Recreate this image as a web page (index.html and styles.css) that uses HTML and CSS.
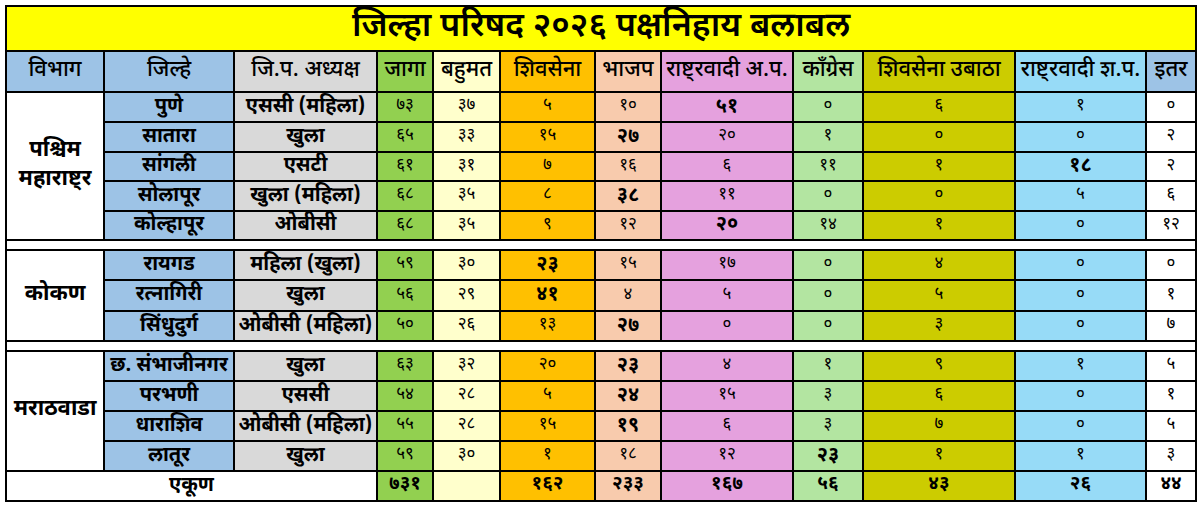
FILE: index.html
```html
<!DOCTYPE html>
<html lang="mr">
<head>
<meta charset="utf-8">
<title>जिल्हा परिषद २०२६ पक्षनिहाय बलाबल</title>
<link rel="stylesheet" href="styles.css">
</head>
<body>
<table class="sheet">
  <colgroup>
    <col class="w-vibhag">
    <col class="w-jilha bg-blue">
    <col class="w-adhyaksha bg-gray">
    <col class="w-jaga bg-green">
    <col class="w-bahumat bg-cream">
    <col class="w-ss bg-orange">
    <col class="w-bjp bg-peach">
    <col class="w-ncp bg-pink">
    <col class="w-cong bg-lgreen">
    <col class="w-ubt bg-olive">
    <col class="w-ncpsp bg-sky">
    <col class="w-itar">
  </colgroup>
  <tbody>
    <tr class="h-title"><td colspan="12" class="title">जिल्हा परिषद २०२६ पक्षनिहाय बलाबल</td></tr>
    <tr class="h-head head">
      <th class="bg-blue">विभाग</th><th>जिल्हे</th><th>जि.प. अध्यक्ष</th><th>जागा</th><th>बहुमत</th><th>शिवसेना</th><th>भाजप</th><th>राष्ट्रवादी अ.प.</th><th>कॉंग्रेस</th><th>शिवसेना उबाठा</th><th>राष्ट्रवादी श.प.</th><th class="bg-blue">इतर</th>
    </tr>

    <tr class="h30"><td rowspan="5" class="region">पश्चिम<br>महाराष्ट्र</td><td class="name">पुणे</td><td class="name">एससी (महिला)</td><td>७३</td><td>३७</td><td>५</td><td>१०</td><td class="win">५१</td><td>०</td><td>६</td><td>१</td><td>०</td></tr>
    <tr class="h30"><td class="name">सातारा</td><td class="name">खुला</td><td>६५</td><td>३३</td><td>१५</td><td class="win">२७</td><td>२०</td><td>१</td><td>०</td><td>०</td><td>२</td></tr>
    <tr class="h29"><td class="name">सांगली</td><td class="name">एसटी</td><td>६१</td><td>३१</td><td>७</td><td>१६</td><td>६</td><td>११</td><td>१</td><td class="win">१८</td><td>२</td></tr>
    <tr class="h30"><td class="name">सोलापूर</td><td class="name">खुला (महिला)</td><td>६८</td><td>३५</td><td>८</td><td class="win">३८</td><td>११</td><td>०</td><td>०</td><td>५</td><td>६</td></tr>
    <tr class="h29"><td class="name">कोल्हापूर</td><td class="name">ओबीसी</td><td>६८</td><td>३५</td><td>९</td><td>१२</td><td class="win">२०</td><td>१४</td><td>१</td><td>०</td><td>१२</td></tr>

    <tr class="sep"><td colspan="12" class="blank"></td></tr>

    <tr class="h30"><td rowspan="3" class="region">कोकण</td><td class="name">रायगड</td><td class="name">महिला (खुला)</td><td>५९</td><td>३०</td><td class="win">२३</td><td>१५</td><td>१७</td><td>०</td><td>४</td><td>०</td><td>०</td></tr>
    <tr class="h31"><td class="name">रत्नागिरी</td><td class="name">खुला</td><td>५६</td><td>२९</td><td class="win">४१</td><td>४</td><td>५</td><td>०</td><td>५</td><td>०</td><td>१</td></tr>
    <tr class="h30"><td class="name">सिंधुदुर्ग</td><td class="name">ओबीसी (महिला)</td><td>५०</td><td>२६</td><td>१३</td><td class="win">२७</td><td>०</td><td>०</td><td>३</td><td>०</td><td>७</td></tr>

    <tr class="sep"><td colspan="12" class="blank"></td></tr>

    <tr class="h30"><td rowspan="4" class="region">मराठवाडा</td><td class="name">छ. संभाजीनगर</td><td class="name">खुला</td><td>६३</td><td>३२</td><td>२०</td><td class="win">२३</td><td>४</td><td>१</td><td>९</td><td>१</td><td>५</td></tr>
    <tr class="h30"><td class="name">परभणी</td><td class="name">एससी</td><td>५४</td><td>२८</td><td>५</td><td class="win">२४</td><td>१५</td><td>३</td><td>६</td><td>०</td><td>१</td></tr>
    <tr class="h30"><td class="name">धाराशिव</td><td class="name">ओबीसी (महिला)</td><td>५५</td><td>२८</td><td>१५</td><td class="win">१९</td><td>६</td><td>३</td><td>७</td><td>०</td><td>५</td></tr>
    <tr class="h30"><td class="name">लातूर</td><td class="name">खुला</td><td>५९</td><td>३०</td><td>१</td><td>१८</td><td>१२</td><td class="win">२३</td><td>१</td><td>१</td><td>३</td></tr>

    <tr class="h30 total"><td colspan="3" class="blank label">एकूण</td><td>७३१</td><td></td><td>१६२</td><td>२३३</td><td>१६७</td><td>५६</td><td>४३</td><td>२६</td><td>४४</td></tr>
  </tbody>
</table>
</body>
</html>
```

FILE: styles.css
```css
html, body {
  margin: 0;
  padding: 0;
  background: #ffffff;
}

body {
  font-family: "Noto Sans Devanagari", "Nirmala UI", "Noto Sans", sans-serif;
  color: #000;
}

.sheet {
  border-collapse: collapse;
  table-layout: fixed;
  width: 1190px;
  margin: 5px 0 0 5px;
}

.sheet td,
.sheet th {
  border: 2px solid #000;
  padding: 0;
  text-align: center;
  vertical-align: middle;
  white-space: nowrap;
  overflow: hidden;
  font-size: 17px;
  font-weight: 400;
  line-height: 1.2;
}

/* column widths */
.w-vibhag { width: 98px; }
.w-jilha { width: 130px; }
.w-adhyaksha { width: 143px; }
.w-jaga { width: 56px; }
.w-bahumat { width: 67px; }
.w-ss { width: 95px; }
.w-bjp { width: 66px; }
.w-ncp { width: 132px; }
.w-cong { width: 70px; }
.w-ubt { width: 152px; }
.w-ncpsp { width: 131px; }
.w-itar { width: 50px; }

/* fills */
.bg-blue { background: #9dc3e6; }
.bg-gray { background: #d9d9d9; }
.bg-green { background: #92d050; }
.bg-cream { background: #ffffcc; }
.bg-orange { background: #ffc000; }
.bg-peach { background: #f8cbad; }
.bg-pink { background: #e5a1de; }
.bg-lgreen { background: #b3e5a1; }
.bg-olive { background: #cccc00; }
.bg-sky { background: #97dbf7; }
.blank { background: #ffffff; }

/* row heights */
.h-title { height: 44px; }
.h-head { height: 41px; }
.h29 { height: 29px; }
.h30 { height: 30px; }
.h31 { height: 31px; }
.sep { height: 10px; }

.sheet .title {
  background: #ffff00;
  font-size: 34px;
  font-weight: 600;
  line-height: 1.25;
  overflow: visible;
}

.head th {
  font-size: 22px;
  font-weight: 500;
}

.sheet .name {
  font-size: 20px;
  font-weight: 700;
}

.sheet .region {
  background: #ffffff;
  font-size: 22px;
  font-weight: 700;
  line-height: 1.3;
}

.sheet .win {
  font-size: 20px;
  font-weight: 700;
}

.total td {
  font-size: 19px;
  font-weight: 700;
}

.total .label {
  font-size: 20px;
}
```
